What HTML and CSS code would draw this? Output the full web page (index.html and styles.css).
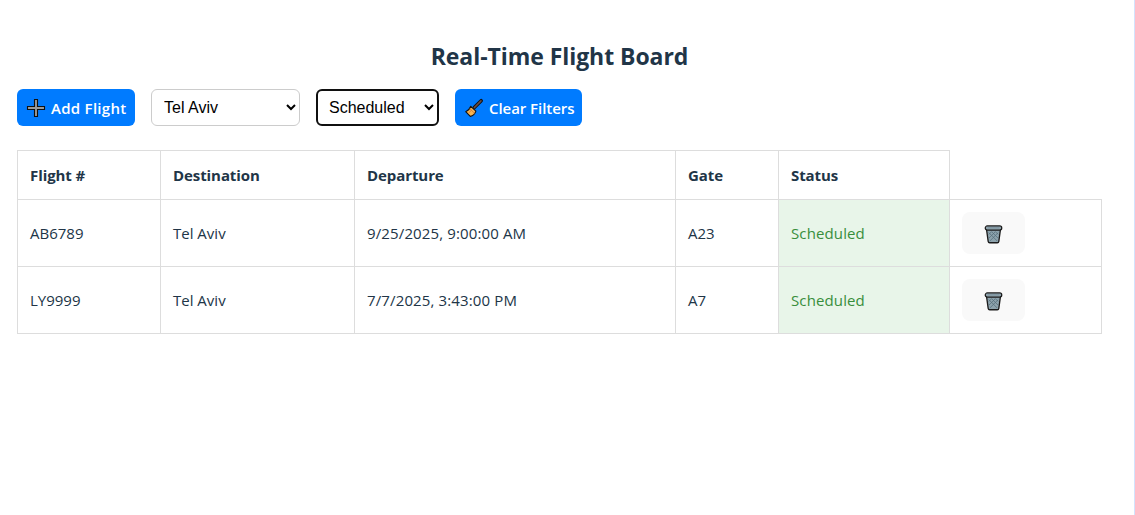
FILE: index.html
```html
<!DOCTYPE html>
<html lang="en">
<head>
<meta charset="utf-8">
<title>Real-Time Flight Board</title>
<link rel="stylesheet" href="styles.css">
</head>
<body>
<svg class="sprite" width="0" height="0" aria-hidden="true">
  <symbol id="trash" viewBox="0 0 20 22">
    <path d="M2.6 5.2L4.4 18.2Q4.6 19.7 6 19.7H14Q15.4 19.7 15.6 18.2L17.4 5.2Z" fill="#8da3ad" stroke="#1b1b1b" stroke-width="1.4"/>
    <path d="M5 9l9 9M8 8l7 7M12 8l3 3M15 9l-9 9M12 8l-7 7M8 8l-3 3" stroke="#546e7a" stroke-width="0.8" fill="none"/>
    <rect x="1.3" y="2" width="17.4" height="4.4" rx="2.2" fill="#90a4ae" stroke="#1b1b1b" stroke-width="1.3"/>
    <path d="M4 4h12" stroke="#78909c" stroke-width="1"/>
  </symbol>
</svg>
<main class="board">
  <h2 class="title">Real-Time Flight Board</h2>
  <div class="toolbar">
    <button class="btn btn-add"><svg class="icon" viewBox="0 0 20 20"><path d="M8.5 1.5h3v7h7v3h-7v7h-3v-7h-7v-3h7z" fill="#9b9b9b" stroke="#111" stroke-width="1.1"/></svg><span>Add Flight</span></button>
    <select class="filter filter-city"><option>Tel Aviv</option></select>
    <select class="filter filter-status"><option>Scheduled</option></select>
    <button class="btn btn-clear"><svg class="icon" viewBox="0 0 20 20"><path d="M17.2 2.7L10.3 9.6" stroke="#111" stroke-width="3.5" stroke-linecap="round"/><path d="M17 2.9L10.3 9.6" stroke="#6d4c41" stroke-width="1.5" stroke-linecap="round"/><path d="M6.8 8.3L11.9 13.2Q10.5 17.7 6.3 18.4L1.7 13.7Q5 12.5 6.8 8.3Z" fill="#f5b451" stroke="#111" stroke-width="1.1" stroke-linejoin="round"/><path d="M5.8 10.7l4.6 4.5M4.6 15l3.2-3.1" stroke="#db803b" stroke-width="1"/></svg><span>Clear Filters</span></button>
  </div>
  <table class="flights">
    <colgroup><col class="c-number"><col class="c-dest"><col class="c-time"><col class="c-gate"><col class="c-status"><col class="c-action"></colgroup>
    <thead><tr><th>Flight #</th><th>Destination</th><th>Departure</th><th>Gate</th><th>Status</th></tr></thead>
    <tbody>
      <tr><td>AB6789</td><td>Tel Aviv</td><td class="time">9/25/2025, 9:00:00 AM</td><td>A23</td><td class="scheduled">Scheduled</td><td><button class="delete" aria-label="Delete"><svg class="trash"><use href="#trash"/></svg></button></td></tr>
      <tr><td>LY9999</td><td>Tel Aviv</td><td class="time">7/7/2025, 3:43:00 PM</td><td>A7</td><td class="scheduled">Scheduled</td><td><button class="delete" aria-label="Delete"><svg class="trash"><use href="#trash"/></svg></button></td></tr>
    </tbody>
  </table>
</main>
</body>
</html>
```
FILE: styles.css
```css
* { box-sizing: border-box; }
body {
  margin: 0;
  height: 515px;
  overflow: hidden;
  background: #fff;
  color: #213547;
  border-right: 1px solid #d3e3fd;
  font-family: "Segoe UI", "Open Sans", sans-serif;
  font-size: 15px;
}
.sprite { display: block; }
.board { width: 1085px; margin-left: 17px; padding-top: 40px; }
.title {
  margin: 0;
  height: 33px;
  line-height: 33px;
  font-size: 23px;
  font-weight: 700;
  letter-spacing: -0.06px;
  text-align: center;
}
.toolbar { display: flex; gap: 16px; margin: 16px 0 24px; }
.btn {
  display: flex;
  align-items: center;
  gap: 6px;
  height: 37px;
  padding: 1px 0 0 9px;
  border: 0;
  border-radius: 6px;
  background: #007bff;
  color: #fff;
  font: 600 15px/20px "Segoe UI", "Open Sans", sans-serif;
  white-space: nowrap;
}
.btn-add { width: 118px; letter-spacing: 0.28px; gap: 5px; }
.btn-clear { width: 127px; letter-spacing: -0.05px; gap: 5px; }
.icon { width: 20px; height: 20px; flex: none; fill: none; }
.filter {
  height: 37px;
  padding: 0 0 0 8px;
  border: 1px solid #ccc;
  border-radius: 6px;
  background: #fff;
  color: #000;
  font: 16px "Liberation Sans", Arial, sans-serif;
}
.filter-city { width: 149px; }
.filter-status { width: 123px; border: 2px solid #101010; padding-left: 7px; }
.flights { width: 1085px; table-layout: fixed; border-collapse: collapse; }
.c-number { width: 143px; }
.c-dest { width: 194px; }
.c-time { width: 321px; }
.c-gate { width: 103px; }
.c-status { width: 171px; }
.c-action { width: 152px; }
th, td { padding: 0 12px; border: 1px solid #ddd; text-align: left; }
th { height: 49px; font-weight: 700; letter-spacing: -0.08px; }
td { height: 67px; }
.time { letter-spacing: 0.13px; }
.scheduled { background: #e8f5e9; color: #388e3c; letter-spacing: 0.12px; }
.delete {
  display: flex;
  align-items: center;
  justify-content: center;
  width: 63px;
  height: 42px;
  padding: 2px 0 0;
  border: 0;
  border-radius: 8px;
  background: #f9f9f9;
}
.trash { width: 19px; height: 21px; }
```
